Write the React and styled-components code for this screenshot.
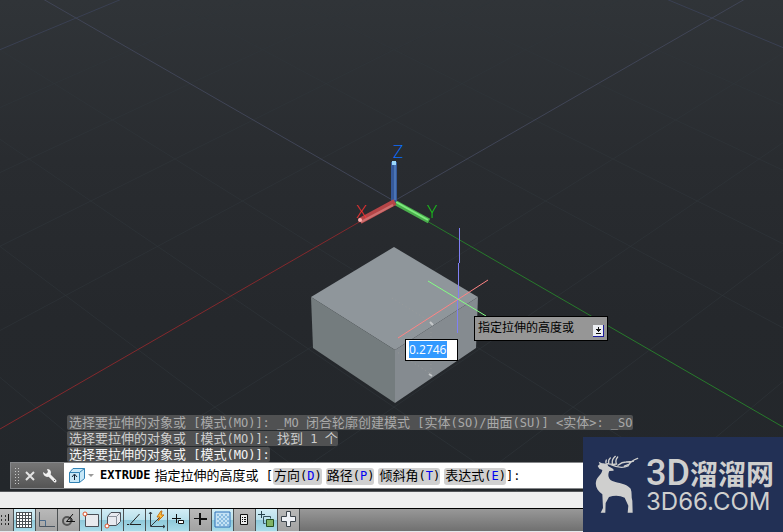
import React from 'react';
import styled, { createGlobalStyle, css } from 'styled-components';

const GlobalStyle = createGlobalStyle`
  * { box-sizing: border-box; }
  html, body, #root { height: 100%; }
  body { margin: 0; overflow: hidden; background: #25292d; }
`;

const mono = `'DejaVu Sans Mono', 'Noto Sans CJK SC', monospace`;
const sans = `'Noto Sans CJK SC', sans-serif`;

const Window = styled.div`
  display: flex;
  flex-direction: column;
  min-height: 100vh;
  position: relative;
`;

const Viewport = styled.main`
  flex: 1;
  position: relative;
  display: flex;
  flex-direction: column;
  justify-content: flex-end;
  overflow: hidden;
  background: linear-gradient(#303438 0, #292c30 160px, #25282c 320px, #23272b 100%);
`;

const Scene = styled.svg`
  position: absolute;
  inset: 0;
  width: 100%;
  height: 100%;
`;

const AxisName = styled.text`
  font: 300 17px Lato, sans-serif;
`;

const HeightBox = styled.label`
  position: absolute;
  left: 405px;
  top: 339px;
  display: flex;
  align-items: center;
  width: 53px;
  height: 22px;
  padding: 0 0 1px 3px;
  border: 1px solid #000;
  background: #fff;
`;

const HeightInput = styled.input`
  width: 38px;
  height: 17px;
  padding: 0;
  border: 0;
  outline: 0;
  background: #3399ff;
  color: #fff;
  font: 12px 'Open Sans', sans-serif;
`;

const Tooltip = styled.div`
  position: absolute;
  left: 474px;
  top: 316px;
  display: flex;
  align-items: center;
  justify-content: space-between;
  width: 134px;
  height: 25px;
  padding: 0 3px;
  border: 1px solid #000;
  background: #969696;
  color: #000;
  font: 12px/20px ${sans};
`;

const TooltipText = styled.span`
  padding-bottom: 3px;
`;

const MenuButton = styled.button`
  width: 11px;
  height: 12px;
  margin-top: 4px;
  padding: 0;
  border: 0;
  background: none;
  svg { display: block; }
`;

const History = styled.div`
  position: relative;
  display: flex;
  flex-direction: column;
  align-items: flex-start;
  gap: 1px;
  margin: 0 0 0 67px;
`;

const HistoryLine = styled.div`
  height: 15px;
  padding: 0 0 0 2px;
  border-radius: 2px;
  background: #505152;
  color: ${(p) => p.$tone};
  font: 12px/14px ${mono};
  white-space: pre;
`;

const Han = styled.span`
  font: 13px/14px ${sans};
`;

const CommandBar = styled.form`
  position: relative;
  display: flex;
  height: 27px;
  margin: 0 0 2px 10px;
  border: 1px solid #85878a;
  border-right: 0;
  background: #fff;
`;

const BarHandle = styled.div`
  display: flex;
  align-items: center;
  width: 53px;
  padding-left: 3px;
  background: linear-gradient(#767676, #555);
`;

const Grip = styled.span`
  width: 6px;
  height: 18px;
  margin-right: 4px;
  background: radial-gradient(circle, #c8c8c8 1px, transparent 1px) 0 0 / 3px 3px;
`;

const IconButton = styled.button`
  display: flex;
  align-items: center;
  justify-content: center;
  width: ${(p) => p.$w}px;
  height: 100%;
  padding: 0;
  border: 0;
  background: none;
`;

const Prompt = styled.div`
  display: flex;
  align-items: center;
  padding-left: 2px;
  color: #000;
  font: 12px/17px ${mono};
  white-space: pre;
`;

const CommandName = styled.strong`
  margin: 0 4px 0 4px;
`;

const PromptText = styled.span`
  padding-top: 1px;
`;

const Option = styled.button`
  height: 17px;
  margin: 1px 4px 0 0;
  padding: 0 0 1px 1px;
  border: 0;
  border-radius: 3px;
  background: #d0d0d0;
  color: #000;
  font: 12px/16px ${mono};
  &:last-of-type { margin-right: 0; }
`;

const Key = styled.span`
  color: #0000f0;
`;

const Strip = styled.div`
  height: 17px;
  border-top: 1px solid #55585b;
  background: #efefef;
`;

const StatusBar = styled.footer`
  display: flex;
  height: 24px;
  border-top: 1px solid #000;
  border-bottom: 1px solid #e4e8ec;
  background: linear-gradient(#989898, #707070);
`;

const Toggles = styled.div`
  display: flex;
  margin-left: -8px;
`;

const Toggle = styled.button`
  width: 22px;
  height: 22px;
  padding: 0;
  border: 0;
  border-right: 1px solid #4c5052;
  background: linear-gradient(#b9b9b9, #a2a2a2);
  ${(p) => p.$on && css`
    background: linear-gradient(#d3edf5 0, #b9e0eb 50%, #8fc9da 52%, #a9dbe9 100%);
  `}
  svg { display: block; }
`;

const Brand = styled.aside`
  position: absolute;
  right: 0;
  bottom: 0;
  display: flex;
  align-items: center;
  gap: 4px;
  width: 200px;
  height: 95px;
  padding-left: 9px;
  background: #223055;
  color: #cfcfce;
  white-space: nowrap;
`;

const BrandWords = styled.div`
  display: flex;
  flex-direction: column;
  gap: 1px;
`;

const BrandName = styled.div`
  display: flex;
  align-items: center;
  height: 34px;
  font: 700 28px/34px ${sans};
`;

const BrandLatin = styled.span`
  font: 500 36px/34px Roboto, sans-serif;
`;

const BrandSite = styled.div`
  height: 22px;
  font: 400 24px/22px Inter, sans-serif;
`;

/* Point of the ground grid, in perspective, seen from above the origin. */
const project = (u, v) => {
  const w = 1 + 0.0384 * (u + v);
  return [394 + (75.8 * (v - u)) / w, (201 - 35.9 * (u + v)) / w];
};

const gridSteps = Array.from({ length: 21 }, (_, i) => i - 10);

function GridLine({ from, to, color }) {
  const [x1, y1] = project(...from);
  const [x2, y2] = project(...to);
  return <line x1={x1} y1={y1} x2={x2} y2={y2} stroke={color} />;
}

function Drawing() {
  return (
    <Scene viewBox="0 0 783 491" preserveAspectRatio="xMidYMin slice" aria-hidden="true">
      {gridSteps.filter((n) => n % 5).map((n) => (
        <g key={n} opacity="0.6">
          <GridLine from={[n, -8]} to={[n, 14]} color="#30363b" />
          <GridLine from={[-8, n]} to={[14, n]} color="#30363b" />
        </g>
      ))}
      <GridLine from={[5, -5]} to={[5, 12]} color="#3a4052" />
      <GridLine from={[-5, 5]} to={[12, 5]} color="#3a4052" />
      <GridLine from={[0, 0]} to={[10, 0]} color="#404556" />
      <GridLine from={[0, 0]} to={[0, 10]} color="#404556" />
      <line x1="394" y1="202" x2="0" y2="429" stroke="#84292d" />
      <line x1="394" y1="202" x2="783" y2="427" stroke="#277a2b" />

      <path d="M391 162h6v39l-3 2-3-2z" fill="#35599a" />
      <path d="M395 164v36" stroke="#4a74b4" strokeWidth="2" />
      <path d="M392 161h4v4h-4z" fill="#9cd8fb" />
      <path d="M396 203 429 221" stroke="#4aae4c" strokeWidth="5" />
      <path d="M396 202 428 220" stroke="#7eea7e" strokeWidth="2" />
      <path d="M395 202 360 221" stroke="#b54547" strokeWidth="6" />
      <path d="M393 205 361 222" stroke="#cc7070" strokeWidth="2" />
      <circle cx="360" cy="220" r="2" fill="#ffb0b0" />
      <AxisName x="393" y="158" fill="#0b6eff">Z</AxisName>
      <AxisName x="356" y="218" fill="#ff3030">X</AxisName>
      <AxisName x="427" y="218" fill="#15d015">Y</AxisName>

      <path d="M394 247 478 297 395 350 311 297z" fill="#8f969b" />
      <path d="M311 297 395 350V403L313 348z" fill="#747c7e" />
      <path d="M395 350 478 297 476 348 395 403z" fill="#858b90" />
      <path d="M392 298 431 322V374L397 352" fill="none" stroke="#a0a09b" strokeDasharray="1 3" opacity="0.6" />
      <path d="M430 322l3 3M429 374l3 2" stroke="#c5c8ca" strokeWidth="2" />
      <path d="M459.500 228V263M458.500 263V299M457.500 299V333" stroke="#8080f4" />
      <path d="M398 338 488 280" stroke="#ff8484" />
      <path d="M428 281 486 316" stroke="#84ff84" />
    </Scene>
  );
}

/* Han characters are set one size larger than the monospaced Latin. */
function Mixed({ children }) {
  return children
    .split(/([\u4e00-\u9fff]+)/)
    .map((part, i) => (i % 2 ? <Han key={i}>{part}</Han> : part));
}

const history = [
  ['#a9a9a9', '选择要拉伸的对象或 [模式(MO)]: _MO 闭合轮廓创建模式 [实体(SO)/曲面(SU)] <实体>: _SO'],
  ['#cdcdcd', '选择要拉伸的对象或 [模式(MO)]: 找到 1 个'],
  ['#f4f4f4', '选择要拉伸的对象或 [模式(MO)]:'],
];

const options = [['方向', 'D'], ['路径', 'P'], ['倾斜角', 'T'], ['表达式', 'E']];

const toggles = [
  ['推断约束', false, <path d="M9.500 6v10M13.500 6v10" stroke="#333" strokeDasharray="2 2" key="a" />,
    <path d="M16.500 5v7m0 2v2" stroke="#111" key="b" />],
  ['栅格显示', true, <path key="a" d="M2 3h15v15H2z" fill="#fff" />,
    <path key="b" d="M2.500 3v16M5.500 3v16M8.500 3v16M11.500 3v16M14.500 3v16M17.500 3v16M2 3.500h16M2 6.500h16M2 9.500h16M2 12.500h16M2 15.500h16M2 18.500h16" stroke="#4a5054" />],
  ['正交模式', false, <path key="a" d="M3.500 3v14.500H19" fill="none" stroke="#4b5560" />,
    <path key="b" d="M4 11.500h5.500V17" fill="none" stroke="#4b6a8a" />],
  ['极轴追踪', false, <circle key="a" cx="9" cy="12" r="4" fill="none" stroke="#555" strokeWidth="2" />,
    <path key="b" d="M15 5 8.500 12.500H17M12 8q3 2 2 5" fill="none" stroke="#111" />],
  ['对象捕捉', true, <path key="a" d="M5.500 5.500h13v12h-13z" fill="#e8eaee" stroke="#4a5058" />,
    <circle key="b" cx="5" cy="5" r="2" fill="#fff" stroke="#e05028" />],
  ['三维对象捕捉', true, <path key="a" d="M5.500 7.500 9 3.500h9.500v9l-4 4h-9z" fill="#e8eaf0" stroke="#4a5058" />,
    <path key="b" d="M5.500 7.500h9v9M14.500 7.500l4-4" fill="none" stroke="#8c929c" />,
    <circle key="c" cx="5" cy="17" r="2" fill="#fff" stroke="#e05028" />],
  ['对象捕捉追踪', true, <path key="a" d="M15.500 5 6 15.500h11" fill="none" stroke="#222" />,
    <path key="b" d="M3 15.500h2" stroke="#222" />],
  ['动态 UCS', true, <path key="a" d="M4.500 3v14.500H19M5 17 14 8M3 5l1.500-2L6 5M17 16l2 1.500-2 1.500" fill="none" stroke="#303840" />,
    <path key="b" d="M15 2 11 8h3l-2 4 6-6h-3l1-4z" fill="#ffc43c" stroke="#c77316" />],
  ['动态输入', true, <path key="a" d="M4 9.500h9M8.500 5v9" stroke="#111" strokeWidth="1" />,
    <path key="b" d="M10.500 11.500h5v3h-5z" fill="#fff" stroke="#111" />],
  ['线宽', false, <path key="a" d="M4 9.500h12" stroke="#111" />,
    <path key="b" d="M10 4v12M11 10h6" stroke="#111" strokeWidth="2" />],
  ['透明度', true, <path key="a" d="M3 3h15v15H3z" fill="#c4e2f4" stroke="#2d70b8" />,
    <path key="b" d="M5 6h12M5 10h12M5 14h12" stroke="#8abbe0" strokeWidth="2" strokeDasharray="2 2" />,
    <path key="c" d="M7 8h10M7 12h10M7 16h10" stroke="#8abbe0" strokeWidth="2" strokeDasharray="2 2" />],
  ['快捷特性', false, <path key="a" d="M6.500 5.500h7v10h-7z" fill="#eee" stroke="#111" />,
    <path key="b" d="M8 8.500h1m1 0h2M8 10.500h1m1 0h2M8 12.500h1m1 0h2" stroke="#111" />],
  ['选择循环', true, <path key="a" d="M2 5.500h7M5.500 2v7" stroke="#26424c" />,
    <path key="b" d="M9.500 14.500H7.500V7.500h7v2" fill="none" stroke="#35525c" />,
    <path key="c" d="M10.500 10.500h7v7h-7z" fill="#7fb365" stroke="#245020" />],
  ['注释监视器', false, <path key="a" d="M8.500 2.500h4v5h5v5h-5v5h-4v-5h-5v-5h5z" fill="#edf0f5" stroke="#3c444c" />],
];

function Deer() {
  return (
    <svg width="50" height="64" viewBox="0 0 150 192" aria-hidden="true">
      <path
        fill="#cfcfce"
        d="M17 39 23 34 20 26 30 31Q40 29 47 38L64 48 65 53 52 54C46 66 49 78 61 84C79 91 103 91 116 107C121 119 117 131 121 143L122 179H107L109 158 98 134Q76 124 51 132L41 150 40 179H26L33 165 31 124C17 114 9 101 12 86C15 70 29 66 31 51L22 47Z"
      />
      <path
        fill="none"
        stroke="#cfcfce"
        strokeWidth="4"
        strokeLinecap="round"
        d="M46 38Q39 29 43 21M46 32Q59 36 74 33M50 30Q48 21 55 15M61 31Q59 19 70 10M73 32Q69 21 77 12M57 35Q87 49 108 39Q116 23 137 16M78 37Q90 27 102 27L124 25M97 39 110 34"
      />
    </svg>
  );
}

export default function App() {
  return (
    <Window>
      <GlobalStyle />
      <Viewport>
        <Drawing />
        <HeightBox>
          <HeightInput aria-label="高度" defaultValue="0.2746" />
        </HeightBox>
        <Tooltip>
          <TooltipText>指定拉伸的高度或</TooltipText>
          <MenuButton type="button" aria-label="选项">
            <svg width="11" height="12" viewBox="0 0 11 12">
              <path d="M0 0h11v12H0z" fill="#1a1a9c" />
              <path d="M0 0h10v11H0z" fill="#eceef2" />
              <path d="M5.500 2v5M3 4.500h5M4 5.500h3M3 8.500h5" stroke="#111" />
            </svg>
          </MenuButton>
        </Tooltip>
        <History>
          {history.map(([tone, text]) => (
            <HistoryLine key={text} $tone={tone}><Mixed>{text}</Mixed></HistoryLine>
          ))}
        </History>
        <CommandBar onSubmit={(e) => e.preventDefault()}>
          <BarHandle>
            <Grip />
            <IconButton type="button" $w={12} aria-label="关闭">
              <svg width="10" height="10" viewBox="0 0 10 10"><path d="M1 1 9 9M9 1 1 9" stroke="#e4e4e4" strokeWidth="2" /></svg>
            </IconButton>
            <IconButton type="button" $w={30} aria-label="自定义">
              <svg width="16" height="16" viewBox="0 0 16 16">
                <path d="M7 7 13 13" stroke="#f0f0f0" strokeWidth="3" strokeLinecap="round" />
                <path d="M5 1Q9 1 9 5 8 9 5 9 1 8 1 4L4 6 6 4Z" fill="#f0f0f0" />
                <path d="M12 12l1 1" stroke="#555" />
              </svg>
            </IconButton>
          </BarHandle>
          <Prompt>
            <IconButton type="button" $w={30} aria-label="最近使用的命令">
              <svg width="26" height="17" viewBox="0 0 26 17">
                <path d="M1.500 5.500 5 1.500h11.500v10l-5 4h-10z" fill="#c8e8f8" stroke="#3282b4" />
                <path d="M1.500 5.500h10v10M11.500 5.500l5-4" fill="none" stroke="#3282b4" />
                <path d="M6.500 13V8M4 10l2.500-3L9 10" fill="none" stroke="#123" />
                <path d="M20 7h6l-3 3z" fill="#999" />
              </svg>
            </IconButton>
            <CommandName>EXTRUDE</CommandName>
            <PromptText><Mixed>指定拉伸的高度或 [</Mixed></PromptText>
            {options.map(([name, key]) => (
              <Option key={key} type="button"><Han>{name}</Han>(<Key>{key}</Key>)</Option>
            ))}
            <PromptText>]:</PromptText>
          </Prompt>
        </CommandBar>
      </Viewport>
      <Strip />
      <StatusBar>
        <Toggles>
          {toggles.map(([name, on, ...icon]) => (
            <Toggle key={name} type="button" $on={on} aria-label={name} aria-pressed={on}>
              <svg width="21" height="22" viewBox="0 0 21 22" fill="none">{icon}</svg>
            </Toggle>
          ))}
        </Toggles>
      </StatusBar>
      <Brand>
        <Deer />
        <BrandWords>
          <BrandName><BrandLatin>3D</BrandLatin>溜溜网</BrandName>
          <BrandSite>3D66.COM</BrandSite>
        </BrandWords>
      </Brand>
    </Window>
  );
}
